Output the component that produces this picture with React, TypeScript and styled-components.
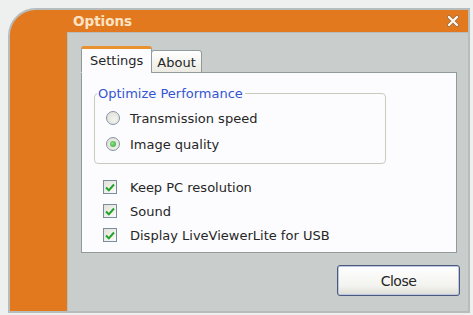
import React from 'react';
import styled, { createGlobalStyle } from 'styled-components';

const GlobalStyle = createGlobalStyle`
    html, body {
        margin: 0;
        padding: 0;
        background: #eceeee;
    }
    * {
        box-sizing: border-box;
    }
`;

const Screen = styled.div`
    width: 473px;
    height: 315px;
    padding: 8px 3px 2px 8px;
    background: #eef0f0;
    overflow: hidden;
    font-family: "DejaVu Sans", Verdana, sans-serif;
    font-size: 13px;
    color: #262626;
`;

const Frame = styled.div`
    height: 100%;
    border: 2px solid #b7bcbc;
    border-top-left-radius: 28px;
    background: #e2791f;
    display: grid;
    grid-template-columns: 57px 1fr;
    grid-template-rows: 22px 1fr;
    overflow: hidden;
`;

const TitleBar = styled.div`
    grid-column: 1 / -1;
    display: flex;
    align-items: center;
    justify-content: space-between;
    padding: 0 9px 0 63px;
`;

const Title = styled.span`
    font-family: "DejaVu Sans", Verdana, sans-serif;
    font-weight: bold;
    font-size: 13.5px;
    color: #fde3c4;
`;

const CloseX = styled.svg`
    width: 12px;
    height: 12px;
    display: block;
`;

const Side = styled.div``;

const Content = styled.div`
    background: #c9cdcc;
    border-top: 1px solid #b8bdbd;
    border-left: 1px solid #b8bdbd;
    padding: 13px 8px 0 13px;
    display: flex;
    flex-direction: column;
`;

const TabStrip = styled.div`
    display: flex;
    align-items: flex-end;
    height: 27px;
    position: relative;
    z-index: 1;
`;

const Tab = styled.div<{ $active?: boolean }>`
    height: ${p => (p.$active ? '27px' : '23px')};
    padding: ${p => (p.$active ? '3px 8px 0 8px' : '3px 5px 0 5px')};
    border: 1px solid #919b9c;
    border-bottom: ${p => (p.$active ? '1px solid #fcfcfe' : '1px solid #919b9c')};
    border-top: ${p => (p.$active ? '3px solid #e8912e' : '1px solid #919b9c')};
    border-radius: 3px 3px 0 0;
    background: ${p => (p.$active ? '#fcfcfe' : 'linear-gradient(#ffffff, #ebeae2)')};
    margin-left: ${p => (p.$active ? '0' : '-1px')};
    font-size: 13px;
    line-height: 18px;
`;

const Panel = styled.div`
    height: 181px;
    margin-top: -1px;
    margin-right: 3px;
    background: #fcfcfe;
    border: 1px solid #919b9c;
    padding: 13px 0 0 12px;
`;

const Group = styled.fieldset`
    width: 292px;
    margin: 0;
    padding: 4px 0 6px 11px;
    border: 1px solid #c9cac0;
    border-radius: 4px;
`;

const Legend = styled.legend`
    margin-left: -9px;
    padding: 0 2px 0 1px;
    color: #3455d3;
    font-size: 13px;
`;

const Row = styled.label<{ $h: number; $gap: number }>`
    display: flex;
    align-items: center;
    height: ${p => p.$h}px;
    gap: ${p => p.$gap}px;
    font-size: 13px;
`;

const RadioCircle = styled.span<{ $checked?: boolean }>`
    width: 14px;
    height: 14px;
    border-radius: 50%;
    border: 1px solid #8395aa;
    background: radial-gradient(circle at 60% 60%, #f4f4ee, #dcdcd4);
    display: flex;
    align-items: center;
    justify-content: center;
    &::after {
        content: '';
        display: ${p => (p.$checked ? 'block' : 'none')};
        width: 6px;
        height: 6px;
        border-radius: 50%;
        background: radial-gradient(circle at 40% 40%, #8be38b, #2d9f2d);
    }
`;

const Checks = styled.div`
    padding: 11px 0 0 9px;
`;

const CheckBox = styled.span`
    width: 14px;
    height: 14px;
    border: 1px solid #7b8ba0;
    background: linear-gradient(135deg, #e2e2da, #fbfbf8);
    display: flex;
    align-items: center;
    justify-content: center;
`;

const Footer = styled.div`
    display: flex;
    justify-content: flex-end;
    margin-top: 12px;
`;

const Button = styled.button`
    width: 123px;
    height: 31px;
    border: 1px solid #4b5a7a;
    border-radius: 3px;
    background: linear-gradient(#ffffff, #f2f2ee 70%, #dcdcd6);
    box-shadow: inset 0 0 0 1px #bcc6e4;
    font-family: "DejaVu Sans", Verdana, sans-serif;
    font-size: 14px;
    letter-spacing: -0.5px;
    color: #262626;
    padding: 0;
`;

const Check = () => (
    <svg width="10" height="9" viewBox="0 0 10 9">
        <path d="M1 4.5 L3.8 7.3 L9 1.5" fill="none" stroke="#22a32b" strokeWidth="2" />
    </svg>
);

const radios = [
    { label: 'Transmission speed', checked: false },
    { label: 'Image quality', checked: true },
];

const checks = ['Keep PC resolution', 'Sound', 'Display LiveViewerLite for USB'];

const App = () => {
    return (
        <Screen>
            <GlobalStyle />
            <Frame>
                <TitleBar>
                    <Title>Options</Title>
                    <CloseX viewBox="0 0 12 12">
                        <path d="M2 2 L10 10 M10 2 L2 10" stroke="#8f6a4a" strokeWidth="3.6" strokeLinecap="round" />
                        <path d="M2 2 L10 10 M10 2 L2 10" stroke="#fff8ee" strokeWidth="2.4" strokeLinecap="round" />
                    </CloseX>
                </TitleBar>
                <Side />
                <Content>
                    <TabStrip>
                        <Tab $active>Settings</Tab>
                        <Tab>About</Tab>
                    </TabStrip>
                    <Panel>
                        <Group>
                            <Legend>Optimize Performance</Legend>
                            {radios.map(r => (
                                <Row key={r.label} $h={26} $gap={10}>
                                    <RadioCircle $checked={r.checked} />
                                    {r.label}
                                </Row>
                            ))}
                        </Group>
                        <Checks>
                            {checks.map(c => (
                                <Row key={c} $h={24} $gap={13}>
                                    <CheckBox><Check /></CheckBox>
                                    {c}
                                </Row>
                            ))}
                        </Checks>
                    </Panel>
                    <Footer>
                        <Button>Close</Button>
                    </Footer>
                </Content>
            </Frame>
        </Screen>
    );
};

export default App;
